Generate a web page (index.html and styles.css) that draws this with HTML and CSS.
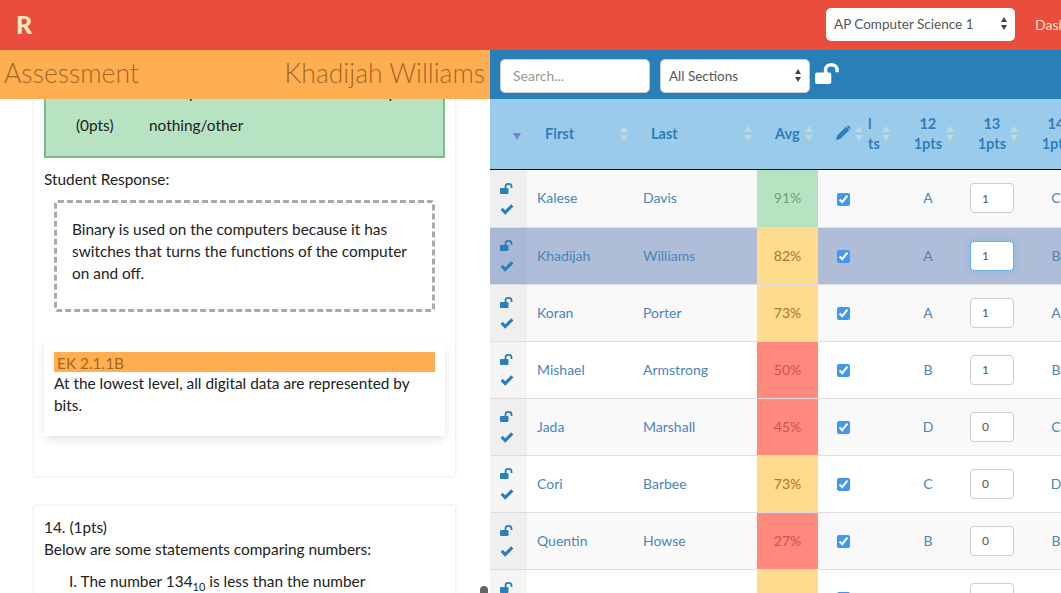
FILE: index.html
```html
<!DOCTYPE html>
<html lang="en">
<head>
    <meta charset="UTF-8">
    <title>Assessment</title>
    <link rel="stylesheet" href="styles.css">
</head>
<body>
    <svg class="defs">
        <symbol id="i-unlock" viewBox="0 0 26 22">
            <rect x="0" y="10" width="17" height="12" rx="2" fill="currentColor"/>
            <path d="M11 11V6.8a6 5 0 0 1 12 0v3" fill="none" stroke="currentColor" stroke-width="3.6"/>
        </symbol>
        <symbol id="i-check" viewBox="0 0 14 12">
            <path d="M0 6.5 2.3 4.2 5 6.9 11.6.4 14 2.8 5 11.7Z" fill="currentColor"/>
        </symbol>
        <symbol id="i-pencil" viewBox="0 0 15 15">
            <path d="M0 15 1 10.8 10 1.6 13.4 5 4.2 14ZM11 .8Q12 0 13 .8L14.2 2Q15 3 14.2 4L14 4.4 10.6 1Z" fill="currentColor"/>
        </symbol>
    </svg>

    <nav class="nav">
        <div class="logo">R</div>
        <div class="pick nav-pick">AP Computer Science 1<span class="updown"></span></div>
        <a class="nav-link">Dashboard</a>
    </nav>

    <main class="main">
        <section class="left">
            <div class="left-title">
                <span>Assessment</span>
                <span>Khadijah Williams</span>
            </div>
            <div class="scroll">
                <div class="card first-card">
                    <div class="rubric">
                        <div class="rubric-row"><span class="pts"></span><span>it has power on and off which is only</span></div>
                        <div class="rubric-row"><span class="pts">(0pts)</span><span>nothing/other</span></div>
                    </div>
                    <div class="resp-label">Student Response:</div>
                    <div class="response">Binary is used on the computers because it has switches that turns the functions of the computer on and off.</div>
                    <div class="standard">
                        <div class="standard-code">EK 2.1.1B</div>
                        <div>At the lowest level, all digital data are represented by bits.</div>
                    </div>
                </div>
                <div class="card">
                    <div>14. (1pts)</div>
                    <div>Below are some statements comparing numbers:</div>
                    <div class="statement">I. The number 134<sub>10</sub> is less than the number</div>
                </div>
            </div>
            <div class="drag-dot"></div>
        </section>

        <section class="right">
            <div class="toolbar">
                <input class="search" placeholder="Search...">
                <div class="pick section-pick">All Sections<span class="updown"></span></div>
                <svg class="toolbar-lock"><use href="#i-unlock"/></svg>
            </div>
            <table class="grades">
                <colgroup>
                    <col class="c-lock"><col class="c-first"><col class="c-last"><col class="c-avg">
                    <col class="c-check"><col class="c-hidden"><col class="c-q"><col class="c-q"><col class="c-q">
                </colgroup>
                <thead>
                    <tr>
                        <th><span class="down"></span></th>
                        <th><div class="th-in th-name">First<span class="sort"></span></div></th>
                        <th><div class="th-in th-name">Last<span class="sort"></span></div></th>
                        <th><div class="th-in th-avg">Avg<span class="sort"></span></div></th>
                        <th><div class="th-in th-edit"><svg class="pencil"><use href="#i-pencil"/></svg><span class="sort"></span></div></th>
                        <th><div class="th-in th-cut"><span>l<br>ts</span><span class="sort"></span></div></th>
                        <th><div class="th-in th-q"><span>12<br>1pts</span><span class="sort"></span></div></th>
                        <th><div class="th-in th-q"><span>13<br>1pts</span><span class="sort"></span></div></th>
                        <th><div class="th-in th-q"><span>14<br>1pts</span><span class="sort"></span></div></th>
                    </tr>
                </thead>
                <tbody>
                    <tr>
                        <td class="lock"><svg class="i-lock"><use href="#i-unlock"/></svg><svg class="i-check"><use href="#i-check"/></svg></td>
                        <td>Kalese</td><td>Davis</td><td class="avg good">91%</td>
                        <td class="mid"><input type="checkbox" checked></td><td></td><td class="mid">A</td>
                        <td class="mid"><input class="score" value="1"></td><td class="mid">C</td>
                    </tr>
                    <tr class="current">
                        <td class="lock"><svg class="i-lock"><use href="#i-unlock"/></svg><svg class="i-check"><use href="#i-check"/></svg></td>
                        <td>Khadijah</td><td>Williams</td><td class="avg okay">82%</td>
                        <td class="mid"><input type="checkbox" checked></td><td></td><td class="mid">A</td>
                        <td class="mid"><input class="score focus" value="1"></td><td class="mid">B</td>
                    </tr>
                    <tr>
                        <td class="lock"><svg class="i-lock"><use href="#i-unlock"/></svg><svg class="i-check"><use href="#i-check"/></svg></td>
                        <td>Koran</td><td>Porter</td><td class="avg okay">73%</td>
                        <td class="mid"><input type="checkbox" checked></td><td></td><td class="mid">A</td>
                        <td class="mid"><input class="score" value="1"></td><td class="mid">A</td>
                    </tr>
                    <tr>
                        <td class="lock"><svg class="i-lock"><use href="#i-unlock"/></svg><svg class="i-check"><use href="#i-check"/></svg></td>
                        <td>Mishael</td><td>Armstrong</td><td class="avg bad">50%</td>
                        <td class="mid"><input type="checkbox" checked></td><td></td><td class="mid">B</td>
                        <td class="mid"><input class="score" value="1"></td><td class="mid">B</td>
                    </tr>
                    <tr>
                        <td class="lock"><svg class="i-lock"><use href="#i-unlock"/></svg><svg class="i-check"><use href="#i-check"/></svg></td>
                        <td>Jada</td><td>Marshall</td><td class="avg bad">45%</td>
                        <td class="mid"><input type="checkbox" checked></td><td></td><td class="mid">D</td>
                        <td class="mid"><input class="score" value="0"></td><td class="mid">C</td>
                    </tr>
                    <tr>
                        <td class="lock"><svg class="i-lock"><use href="#i-unlock"/></svg><svg class="i-check"><use href="#i-check"/></svg></td>
                        <td>Cori</td><td>Barbee</td><td class="avg okay">73%</td>
                        <td class="mid"><input type="checkbox" checked></td><td></td><td class="mid">C</td>
                        <td class="mid"><input class="score" value="0"></td><td class="mid">D</td>
                    </tr>
                    <tr>
                        <td class="lock"><svg class="i-lock"><use href="#i-unlock"/></svg><svg class="i-check"><use href="#i-check"/></svg></td>
                        <td>Quentin</td><td>Howse</td><td class="avg bad">27%</td>
                        <td class="mid"><input type="checkbox" checked></td><td></td><td class="mid">B</td>
                        <td class="mid"><input class="score" value="0"></td><td class="mid">B</td>
                    </tr>
                    <tr>
                        <td class="lock"><svg class="i-lock"><use href="#i-unlock"/></svg><svg class="i-check"><use href="#i-check"/></svg></td>
                        <td>Talia</td><td>Hill</td><td class="avg okay">70%</td>
                        <td class="mid"><input type="checkbox" checked></td><td></td><td class="mid">A</td>
                        <td class="mid"><input class="score" value="0"></td><td class="mid">A</td>
                    </tr>
                </tbody>
            </table>
        </section>
    </main>
</body>
</html>
```

FILE: styles.css
```css
* {
    box-sizing: border-box;
}
html, body {
    height: 100%;
}
body {
    margin: 0;
    overflow: hidden;
    font-family: "Lato", sans-serif;
    font-size: 15.4px;
    line-height: 22px;
    color: #222;
    background: #fff;
    display: flex;
    flex-direction: column;
}
.defs {
    display: none;
}

/* top bar */
.nav {
    height: 50px;
    flex: none;
    background: #e94d3d;
    display: flex;
    align-items: center;
    overflow: hidden;
}
.logo {
    margin: -3px 0 0 16px;
    flex: none;
    width: 18px;
    font-size: 25px;
    font-weight: 900;
    color: #fbe7bd;
}
.nav-pick {
    margin: 0 0 1px 792px;
    flex: none;
    width: 189px;
    height: 33px;
    padding-bottom: 2px;
}
.nav-link {
    margin-left: 20px;
    flex: none;
    font-size: 14px;
    color: #fde3c4;
}
.pick {
    display: flex;
    align-items: center;
    justify-content: space-between;
    padding-left: 8px;
    padding-right: 8px;
    background: #fff;
    border-radius: 5px;
    font-size: 13.5px;
    color: #555;
}
.updown {
    width: 6px;
    height: 13px;
    display: flex;
    flex-direction: column;
    justify-content: space-between;
}
.updown::before, .updown::after, .sort::before, .sort::after {
    content: "";
    display: block;
    width: 0;
    height: 0;
    border-left: 4px solid transparent;
    border-right: 4px solid transparent;
}
.updown::before, .updown::after {
    border-left-width: 3px;
    border-right-width: 3px;
}
.updown::before {
    border-bottom: 5px solid #444;
}
.updown::after {
    border-top: 5px solid #444;
}

/* two panes */
.main {
    flex: 1;
    display: flex;
    min-height: 0;
}
.left {
    width: 490px;
    flex: none;
    display: flex;
    flex-direction: column;
    position: relative;
    overflow: hidden;
}
.left-title {
    height: 49px;
    flex: none;
    background: #ffae52;
    color: #a3681f;
    font-size: 26.5px;
    font-weight: 300;
    line-height: 47px;
    padding: 0 5px 0 4px;
    display: flex;
    justify-content: space-between;
    position: relative;
    z-index: 1;
}
.scroll {
    flex: 1;
    overflow: hidden;
    padding: 0 35px 0 34px;
}
.card {
    background: #fff;
    box-shadow: 0 0 3px rgba(0, 0, 0, 0.14);
    padding: 10px;
    margin-bottom: 30px;
}
.first-card {
    margin-top: -39px;
    padding-bottom: 40px;
}
.rubric {
    background: #b7e3c3;
    border: 2px solid #78bc8c;
    padding: 0 0 0 30px;
    height: 88px;
}
.rubric-row {
    display: flex;
    height: 33px;
    white-space: nowrap;
    overflow: hidden;
    padding-top: 1px;
}
.rubric-row:first-child {
    margin-top: 8px;
}
.pts {
    width: 73px;
    flex: none;
}
.resp-label {
    margin-top: 10px;
}
.response {
    margin: 10px 10px 0;
    height: 112px;
    border: 3px dashed #aaa;
    border-radius: 4px;
    padding: 15px;
}
.standard {
    margin-top: 28px;
    padding: 12px 10px 20px;
    box-shadow: 0 4px 10px -2px rgba(0, 0, 0, 0.15);
}
.standard-code {
    background: #ffae52;
    color: #a3681f;
    height: 20px;
    line-height: 22px;
    padding-left: 3px;
}
.statement {
    margin: 10px 0 0 25px;
}
sub {
    font-size: 11px;
    line-height: 0;
}
.drag-dot {
    position: absolute;
    right: 2px;
    bottom: -4px;
    width: 8px;
    height: 11px;
    border-radius: 4px;
    background: #666;
}

/* grades */
.right {
    flex: 1;
    min-width: 0;
    overflow: hidden;
}
.toolbar {
    height: 49px;
    background: #2980b9;
    display: flex;
    align-items: center;
    padding: 2px 10px 0;
}
.search {
    width: 150px;
    height: 34px;
    border: 1px solid #ccc;
    border-radius: 5px;
    padding: 0 12px;
    font: 14px "Lato", sans-serif;
    color: #555;
}
.search::placeholder {
    color: #999;
}
.section-pick {
    width: 150px;
    height: 34px;
    margin-left: 10px;
    border: 1px solid #ccc;
}
.toolbar-lock {
    width: 25px;
    height: 21px;
    margin: -5px 0 0 5px;
    color: #fff;
}
.grades {
    table-layout: fixed;
    border-collapse: collapse;
    width: 598px;
    font-size: 14px;
}
.c-lock { width: 37px; }
.c-first { width: 106px; }
.c-last { width: 124px; }
.c-avg { width: 61px; }
.c-check { width: 50px; }
.c-hidden { width: 28px; }
.c-q { width: 64px; }
.grades th {
    height: 70px;
    padding: 0;
    background: #9bcbeb;
    border-bottom: 1px solid #111;
    color: #2f7dbb;
    font-size: 14.5px;
    font-weight: 700;
    line-height: 20px;
    text-align: left;
}
.th-in {
    display: flex;
    align-items: center;
    white-space: nowrap;
    overflow: hidden;
}
.th-name {
    padding: 0 5px 0 18px;
    justify-content: space-between;
}
.th-avg {
    padding: 0 5px 0 18px;
    justify-content: space-between;
}
.th-edit {
    padding: 0 5px 0 18px;
    justify-content: space-between;
}
.th-cut {
    padding-right: 6px;
    justify-content: space-between;
}
.th-q {
    justify-content: flex-end;
    padding-right: 6px;
    gap: 4px;
    text-align: center;
}
.down {
    display: block;
    width: 0;
    height: 0;
    margin: 6px 0 0 23px;
    border-left: 4px solid transparent;
    border-right: 4px solid transparent;
    border-top: 7px solid #7a80dc;
}
.sort {
    flex: none;
    width: 8px;
    display: flex;
    flex-direction: column;
    gap: 3px;
}
.sort::before {
    border-bottom: 6px solid #c9d4db;
}
.sort::after {
    border-top: 6px solid #c9d4db;
}
.pencil {
    width: 15px;
    height: 15px;
    color: #2f7dbb;
    margin-top: -2px;
}
.grades td {
    height: 57px;
    padding: 0 0 0 10px;
    border-bottom: 1px solid #ddd;
    color: #4a86ba;
    background: #fff;
    white-space: nowrap;
}
.grades tbody tr:first-child td {
    height: 58px;
}
.grades tbody tr:nth-child(odd) td {
    background: #f9f9f9;
}
.grades td.lock {
    padding: 0;
    background: #f5f5f5;
    text-align: center;
    line-height: 0;
}
.grades tbody tr:nth-child(odd) td.lock {
    background: #efefef;
}
.i-lock {
    display: block;
    width: 13px;
    height: 11px;
    margin: 1px 0 10px 10px;
    color: #2980b9;
}
.i-check {
    display: block;
    width: 14px;
    height: 11px;
    margin-left: 10px;
    color: #2980b9;
}
.grades td.mid {
    padding: 0;
    text-align: center;
}
.grades td.avg {
    padding: 0;
    text-align: center;
}
.grades tbody tr td.good {
    background: #b7e3c3;
    color: #6da37e;
}
.grades tbody tr td.okay {
    background: #ffdb8e;
    color: #b0742a;
}
.grades tbody tr td.bad {
    background: #ff897d;
    color: #c5584e;
}
.grades tbody tr.current td {
    background: #afbdd9;
}
.grades tbody tr.current td.lock {
    background: #a9b8d5;
}
.grades tbody tr.current td.okay {
    background: #ffdb8e;
}
input[type="checkbox"] {
    width: 13px;
    height: 13px;
    margin: 0;
    vertical-align: middle;
    accent-color: #4097f5;
}
.score {
    width: 44px;
    height: 30px;
    border: 1px solid #ccc;
    border-radius: 4px;
    padding: 0 0 0 11px;
    font: 12px "Lato", sans-serif;
    color: #555;
    background: #fff;
    vertical-align: middle;
}
.focus {
    border-color: #66afe9;
    box-shadow: 0 0 6px rgba(102, 175, 233, 0.6);
}
```
